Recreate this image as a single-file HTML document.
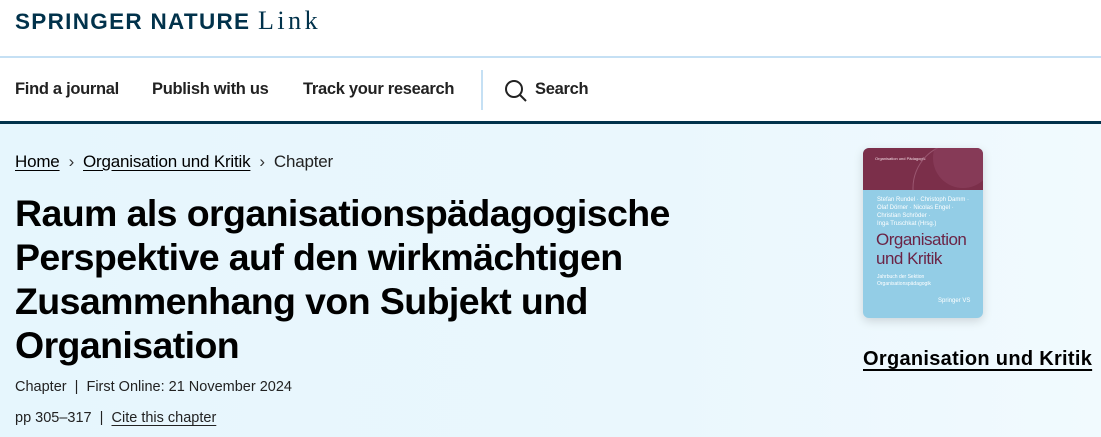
<!DOCTYPE html>
<html><head><meta charset="utf-8"><style>
*{margin:0;padding:0;box-sizing:border-box}
body{width:1101px;height:437px;overflow:hidden;font-family:"Liberation Sans",sans-serif;background:#fff;color:#000}
.logo{position:absolute;left:15px;top:0;color:#01324b;white-space:nowrap}
.logo b{position:absolute;left:0;top:9px;font-weight:bold;font-size:22.5px;letter-spacing:1.3px}
.logo span{position:absolute;left:243px;top:6px;font-family:"Liberation Serif",serif;font-size:26px;letter-spacing:3.5px}
.l1{position:absolute;left:0;top:56px;width:1101px;height:2px;background:#c5e0f4}
.nav{position:absolute;top:80px;font-size:16.5px;font-weight:bold;color:#222;letter-spacing:-0.3px;white-space:nowrap}
.vsep{position:absolute;left:481px;top:70px;width:2px;height:40px;background:#c5e0f4}
.l2{position:absolute;left:0;top:121px;width:1101px;height:3px;background:#01324b}
.hero{position:absolute;left:0;top:124px;width:1101px;height:313px;background:linear-gradient(90deg,#e6f6fd,#eaf7fd 60%,#f1fafe)}
.bc{position:absolute;top:152px;left:15px;font-size:17px;color:#222;white-space:nowrap;letter-spacing:-0.2px}
.bc a{color:#000;text-decoration:underline;text-underline-offset:3px}
.bc i{font-style:normal;margin:0 9px;color:#333}
h1{position:absolute;left:15px;top:191px;font-size:37.5px;line-height:44px;font-weight:bold;letter-spacing:-0.6px;color:#000;white-space:nowrap}
.meta{position:absolute;left:15px;font-size:14.5px;color:#222;white-space:nowrap}
.meta a{color:#222;text-decoration:underline;text-underline-offset:3px}
.cover{position:absolute;left:863px;top:148px;width:120px;height:170px;border-radius:6px;background:#93cde6;overflow:hidden;box-shadow:0 3px 10px rgba(0,0,0,.15);font-family:"Liberation Sans",sans-serif}
.ctop{height:42px;background:#7b2f4a;position:relative}
.btitle{position:absolute;left:863px;top:348px;font-size:20px;font-weight:bold;text-decoration:underline;text-underline-offset:4px;white-space:nowrap;letter-spacing:0.3px}
</style></head><body>
<div class="logo"><b>SPRINGER NATURE</b><span>Link</span></div>
<div class="l1"></div>
<div class="nav" style="left:15px">Find a journal</div>
<div class="nav" style="left:152px">Publish with us</div>
<div class="nav" style="left:303px">Track your research</div>
<div class="vsep"></div>
<svg style="position:absolute;left:504px;top:79px" width="24" height="24" viewBox="0 0 24 24"><circle cx="10" cy="10" r="8" fill="none" stroke="#222" stroke-width="2"/><path d="M16 16l6 6" stroke="#222" stroke-width="2"/></svg>
<div class="nav" style="left:535px">Search</div>
<div class="l2"></div>
<div class="hero"></div>
<div class="bc"><a>Home</a><i>›</i><a>Organisation und Kritik</a><i>›</i>Chapter</div>
<h1>Raum als organisationspädagogische<br>Perspektive auf den wirkmächtigen<br>Zusammenhang von Subjekt und<br>Organisation</h1>
<div class="meta" style="top:379px">Chapter &nbsp;|&nbsp; First Online: 21 November 2024</div>
<div class="meta" style="top:410px">pp 305–317 &nbsp;|&nbsp; <a>Cite this chapter</a></div>
<div class="cover">
 <div class="ctop"><div style="position:absolute;left:12px;top:8px;font-size:4px;color:#f3dce4">Organisation und Pädagogik</div>
 <svg width="120" height="42" style="position:absolute;left:0;top:0"><circle cx="95" cy="40" r="45" fill="none" stroke="#9a5670" stroke-width="1"/><circle cx="100" cy="10" r="30" fill="#8d4260" opacity=".6"/></svg></div>
 <div style="position:absolute;left:14px;top:48px;font-size:6px;line-height:8px;color:#fff">Stefan Rundel · Christoph Damm ·<br>Olaf Dörner · Nicolas Engel ·<br>Christian Schröder ·<br>Inga Truschkat (Hrsg.)</div>
 <div style="position:absolute;left:13px;top:82px;font-size:17px;line-height:19px;color:#6b2446;letter-spacing:-0.5px">Organisation<br>und Kritik</div>
 <div style="position:absolute;left:14px;top:126px;font-size:5px;line-height:7px;color:#fff">Jahrbuch der Sektion<br>Organisationspädagogik</div>
 <div style="position:absolute;left:75px;top:150px;font-size:6px;color:#fff">Springer VS</div>
</div>
<div class="btitle">Organisation und Kritik</div>
</body></html>
